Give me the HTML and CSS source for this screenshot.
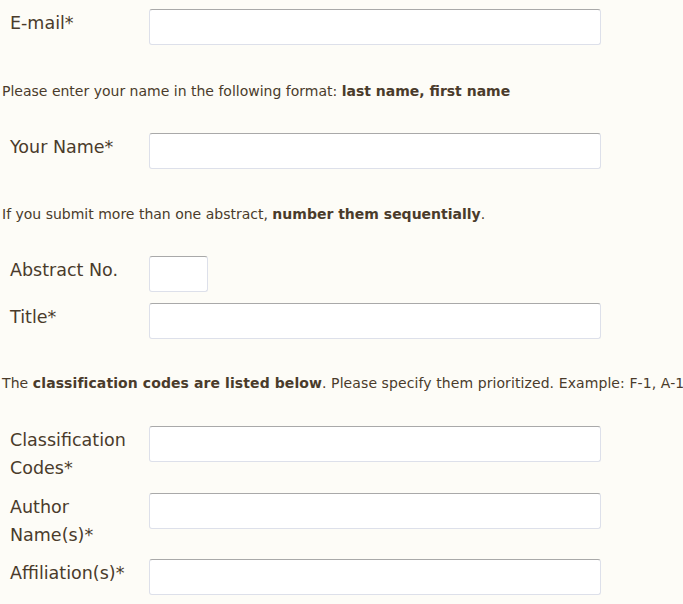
FILE: index.html
```html
<!DOCTYPE html>
<html>
<head>
<meta charset="utf-8">
<link rel="stylesheet" href="styles.css">
</head>
<body>
<form class="form">
  <div class="row">
    <label class="label">E-mail*</label>
    <input class="field" type="text">
  </div>
  <p class="note note-1">Please enter your name in the following format: <b>last name, first name</b></p>
  <div class="row">
    <label class="label">Your Name*</label>
    <input class="field" type="text">
  </div>
  <p class="note note-2">If you submit more than one abstract, <b>number them sequentially</b>.</p>
  <div class="row">
    <label class="label">Abstract No.</label>
    <input class="field field-small" type="text">
  </div>
  <div class="row row-next">
    <label class="label">Title*</label>
    <input class="field" type="text">
  </div>
  <p class="note note-3">The <b>classification codes are listed below</b>. Please specify them prioritized. Example: F-1, A-1</p>
  <div class="row">
    <label class="label">Classification Codes*</label>
    <input class="field" type="text">
  </div>
  <div class="row row-next">
    <label class="label">Author Name(s)*</label>
    <input class="field" type="text">
  </div>
  <div class="row row-tight">
    <label class="label">Affiliation(s)*</label>
    <input class="field" type="text">
  </div>
</form>
</body>
</html>
```

FILE: styles.css
```css
html, body {
  margin: 0;
  padding: 0;
  background: #fdfcf7;
}
body {
  color: #4a3b2b;
  font-family: "DejaVu Sans", sans-serif;
  overflow: hidden;
}
.form {
  padding-top: 9px;
}
.row {
  display: flex;
  align-items: flex-start;
}
.row-next {
  margin-top: 11px;
}
.row-tight {
  margin-top: 10px;
}
.label {
  width: 149px;
  padding-left: 10px;
  padding-right: 12px;
  box-sizing: border-box;
  font-size: 17.5px;
  line-height: 28px;
  flex-shrink: 0;
}
.field {
  display: block;
  width: 452px;
  height: 36px;
  box-sizing: border-box;
  margin: 0;
  padding: 0 6px;
  background: #ffffff;
  border: 1px solid #dde0ea;
  border-top-color: #a9a9a9;
  border-radius: 3px;
  outline: none;
}
.field-small {
  width: 59px;
}
.note {
  margin: 0 0 0 2px;
  font-size: 14px;
  line-height: 20px;
  white-space: nowrap;
}
.note-1 {
  margin-top: 36px;
  margin-bottom: 32px;
}
.note-2 {
  margin-top: 35px;
  margin-bottom: 32px;
}
.note-3 {
  margin-top: 34px;
  margin-bottom: 33px;
  letter-spacing: 0.09px;
}
.note b {
  font-weight: bold;
}
```
